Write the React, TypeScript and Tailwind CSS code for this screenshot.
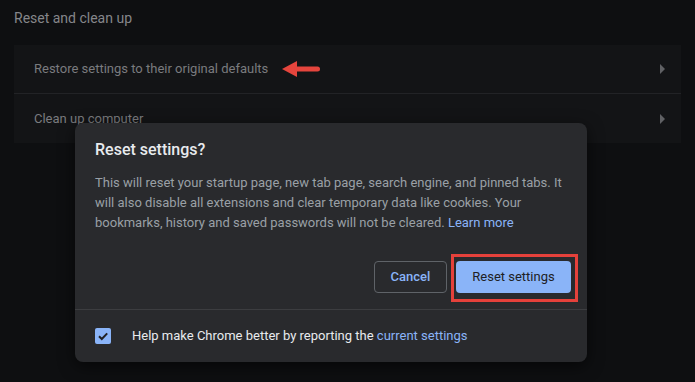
export default function App() {
  return (
    <div
      className="relative w-[695px] h-[382px] overflow-hidden bg-[#0e0f11]"
      style={{ fontFamily: 'Roboto, "Liberation Sans", sans-serif' }}
    >
      <div className="pl-[14px] pt-[8px] h-[28px] text-[14px] leading-[20px] text-[#85868a]">
        Reset and clean up
      </div>

      <div className="ml-[14px] mt-[17px] w-[667px] bg-[#131416]">
        <div className="h-[48px] flex items-center pl-[20px] pr-[15px]">
          <span className="text-[13px] text-[#7a7b7e]">Restore settings to their original defaults</span>
          <svg width="38" height="18" viewBox="0 0 38 18" className="ml-[14px]">
            <path d="M0 9 L15 1 L15 17 Z" fill="#e5453d" />
            <rect x="12" y="6.5" width="26" height="5" rx="2.5" fill="#e5453d" />
          </svg>
          <Chevron />
        </div>
        <div className="h-px bg-[#222326]" />
        <div className="h-[49px] flex items-center pl-[20px] pr-[15px]">
          <span className="text-[13px] text-[#7a7b7e]">Clean up computer</span>
          <Chevron />
        </div>
      </div>

      <div className="absolute left-[75px] top-[123px] w-[512px] h-[239px] rounded-[8px] bg-[#292a2d] shadow-[0_4px_16px_rgba(0,0,0,0.6)] flex flex-col">
        <div className="px-[20px] pt-[15px]">
          <h2 className="text-[16px] leading-[24px] font-medium text-[#e8eaed]">Reset settings?</h2>
          <p className="mt-[11px] text-[13px] leading-[20px] text-[#9aa0a6]">
            This will reset your startup page, new tab page, search engine, and pinned tabs. It
            will also disable all extensions and clear temporary data like cookies. Your
            bookmarks, history and saved passwords will not be cleared.{' '}
            <span className="text-[#8ab4f8]">Learn more</span>
          </p>
        </div>
        <div className="flex justify-end gap-[9px] pr-[16px] mt-[28px]">
          <button className="h-[32px] w-[73px] rounded-[4px] border border-[#5f6368] text-[13px] font-medium text-[#8ab4f8]">
            Cancel
          </button>
          <div className="relative">
            <button className="h-[32px] w-[115px] rounded-[4px] bg-[#8ab4f8] text-[13px] text-[#202124]">
              Reset settings
            </button>
            <span className="absolute -left-[5px] -right-[7px] -top-[7px] -bottom-[9px] border-[3px] border-[#e5413b]" />
          </div>
        </div>
        <div className="mt-[16px] h-px bg-[#3c3d40]" />
        <div className="flex-1 flex items-center pl-[20px]">
          <span className="w-[16px] h-[16px] rounded-[2px] bg-[#8ab4f8] flex items-center justify-center">
            <svg width="12" height="12" viewBox="0 0 12 12">
              <path d="M2 6.2 L4.8 9 L10.2 3.4" fill="none" stroke="#202124" strokeWidth="2" />
            </svg>
          </span>
          <span className="ml-[21px] text-[13px] text-[#e8eaed]">
            Help make Chrome better by reporting the{' '}
            <span className="text-[#8ab4f8]">current settings</span>
          </span>
        </div>
      </div>
    </div>
  );
}

function Chevron() {
  return (
    <svg width="6" height="10" viewBox="0 0 6 10" className="ml-auto">
      <path d="M0 0 L5 5 L0 10 Z" fill="#606164" />
    </svg>
  );
}
